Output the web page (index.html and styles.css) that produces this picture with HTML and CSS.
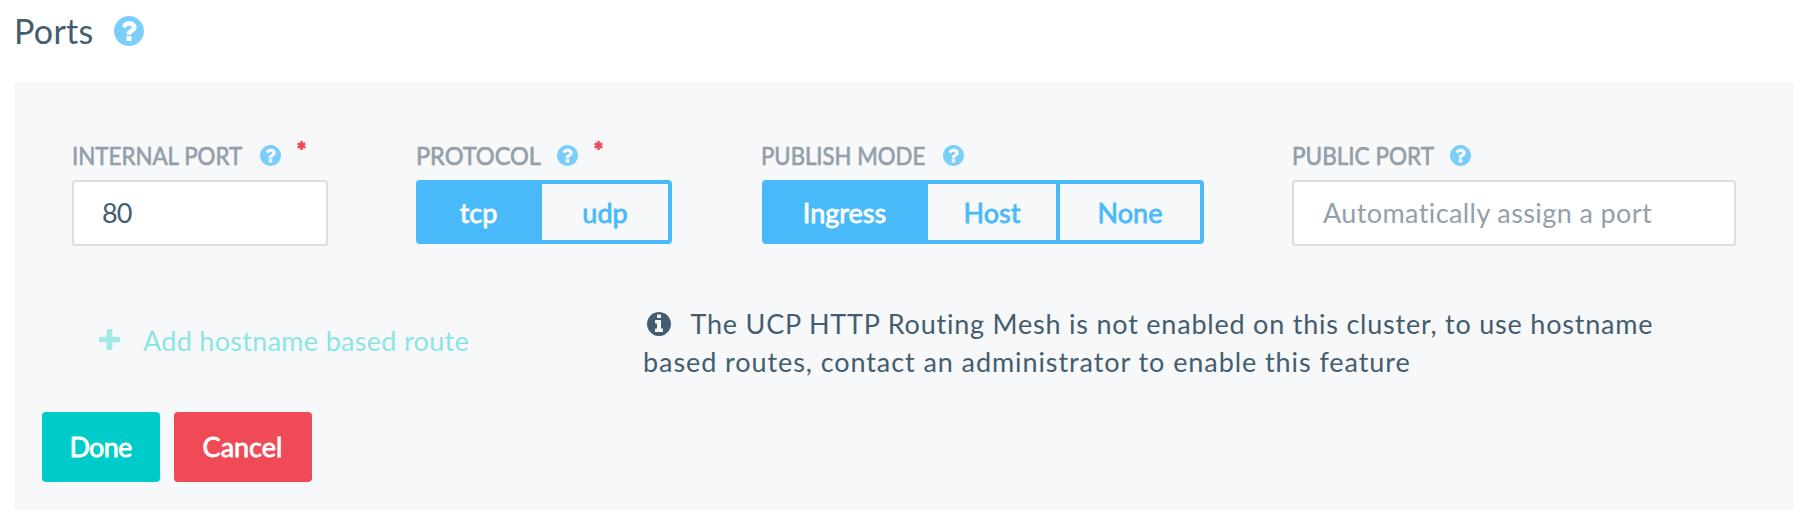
FILE: index.html
```html
<!DOCTYPE html>
<html lang="en">
<head>
<meta charset="utf-8">
<title>Ports</title>
<link rel="stylesheet" href="styles.css">
</head>
<body>
<svg class="sprite" aria-hidden="true">
  <symbol id="help" viewBox="128 128 1536 1536"><path d="M1024 1376v-192q0-14-9-23t-23-9h-192q-14 0-23 9t-9 23v192q0 14 9 23t23 9h192q14 0 23-9t9-23zm256-672q0-88-55.5-163t-138.5-116-170-41q-243 0-371 213-15 24 8 42l132 100q7 6 19 6 16 0 25-12 53-68 86-92 34-24 86-24 48 0 85.5 26t37.5 59q0 38-20 61t-68 45q-63 28-115.5 86.5t-52.5 125.5v36q0 14 9 23t23 9h192q14 0 23-9t9-23q0-19 21.5-49.5t54.5-49.5q32-18 49-28.5t46-35 44.5-48 28-60.5 12.5-81zm384 192q0 209-103 385.5t-279.5 279.5-385.5 103-385.5-103-279.5-279.5-103-385.5 103-385.5 279.5-279.5 385.5-103 385.5 103 279.5 279.5 103 385.5z"/></symbol>
  <symbol id="info" viewBox="128 128 1536 1536"><path d="M1152 1376v-160q0-14-9-23t-23-9h-96v-512q0-14-9-23t-23-9h-320q-14 0-23 9t-9 23v160q0 14 9 23t23 9h96v320h-96q-14 0-23 9t-9 23v160q0 14 9 23t23 9h448q14 0 23-9t9-23zm-128-896v-160q0-14-9-23t-23-9h-192q-14 0-23 9t-9 23v160q0 14 9 23t23 9h192q14 0 23-9t9-23zm640 416q0 209-103 385.5t-279.5 279.5-385.5 103-385.5-103-279.5-279.5-103-385.5 103-385.5 279.5-279.5 385.5-103 385.5 103 279.5 279.5 103 385.5z"/></symbol>
  <symbol id="plus" viewBox="192 192 1408 1408"><path d="M1600 800v192q0 40-28 68t-68 28h-416v416q0 40-28 68t-68 28h-192q-40 0-68-28t-28-68v-416h-416q-40 0-68-28t-28-68v-192q0-40 28-68t68-28h416v-416q0-40 28-68t68-28h192q40 0 68 28t28 68v416h416q40 0 68 28t28 68z"/></symbol>
  <symbol id="asterisk" viewBox="0 0 9 9"><path d="M4.5 0v9M.7 2.4l7.6 4.2M8.3 2.4L.7 6.6" stroke="currentColor" stroke-width="2.5"/></symbol>
</svg>
<header class="heading">
  <h1 class="title">Ports</h1>
  <svg class="help help-large"><use href="#help"/></svg>
</header>
<main class="panel">
  <div class="fields">
    <div class="field internal">
      <div class="label"><span class="label-text">INTERNAL PORT</span><svg class="help"><use href="#help"/></svg><svg class="required"><use href="#asterisk"/></svg></div>
      <input class="input" type="text" value="80" aria-label="Internal port">
    </div>
    <div class="field protocol">
      <div class="label"><span class="label-text">PROTOCOL</span><svg class="help"><use href="#help"/></svg><svg class="required"><use href="#asterisk"/></svg></div>
      <div class="segments">
        <button class="segment active tcp">tcp</button>
        <button class="segment udp">udp</button>
      </div>
    </div>
    <div class="field publish">
      <div class="label"><span class="label-text">PUBLISH MODE</span><svg class="help"><use href="#help"/></svg></div>
      <div class="segments">
        <button class="segment active ingress">Ingress</button>
        <button class="segment host">Host</button>
        <button class="segment none">None</button>
      </div>
    </div>
    <div class="field public">
      <div class="label"><span class="label-text">PUBLIC PORT</span><svg class="help"><use href="#help"/></svg></div>
      <input class="input" type="text" placeholder="Automatically assign a port" aria-label="Public port">
    </div>
  </div>
  <div class="routes">
    <a class="add-route"><svg class="plus"><use href="#plus"/></svg><span class="add-text">Add hostname based route</span></a>
    <p class="notice"><svg class="info"><use href="#info"/></svg><span class="line-one">The UCP HTTP Routing Mesh is not enabled on this cluster, to use hostname</span><br><span class="line-two">based routes, contact an administrator to enable this feature</span></p>
  </div>
  <div class="actions">
    <button class="button done">Done</button>
    <button class="button cancel">Cancel</button>
  </div>
</main>
</body>
</html>
```
FILE: styles.css
```css
* { box-sizing: border-box; }
body {
  margin: 0;
  background: #fff;
  color: #445d6e;
  font-family: Lato, "Open Sans", sans-serif;
  font-size: 27px;
}
button, input { font: inherit; margin: 0; }
.sprite { display: none; }
.heading {
  display: flex;
  height: 82px;
  padding: 10px 14px 0;
}
.title {
  width: 100px;
  margin: 0;
  font-size: 34px;
  font-weight: 400;
  line-height: 42px;
  letter-spacing: .3px;
  white-space: nowrap;
}
.help { width: 21px; height: 21px; margin: 3px 0 0 -.5px; fill: #7bcefb; flex: none; }
.help-large { width: 30px; height: 30px; margin-top: 6px; }
.panel {
  width: 1780px;
  height: 428px;
  margin-left: 14px;
  padding: 56px 28px 28px;
  border-radius: 4px;
  background: #f7f8fa;
}
.fields {
  display: grid;
  grid-template-columns: 344px 346px 530px 444px;
  margin-left: 30px;
}
.label { display: flex; height: 42px; padding-top: 4px; color: #939fab; }
.label-text {
  margin-top: -2px;
  font-size: 25px;
  line-height: 30px;
  white-space: nowrap;
  transform-origin: left;
  -webkit-text-stroke: .7px currentColor;
}
.internal .label-text { width: 188px; transform: scaleX(.894); }
.protocol .label-text { width: 141px; transform: scaleX(.94); }
.publish .label-text { width: 182px; margin-left: -1px; transform: scaleX(.887); }
.public .label-text { width: 158px; transform: scaleX(.902); }
.required { width: 9px; height: 9px; margin: -1px 0 0 16px; color: #ef4a55; }
.input {
  display: block;
  width: 256px;
  height: 66px;
  padding: 0 28px 2px;
  border: 2px solid #ddd;
  border-radius: 4px;
  background: #fff;
  color: #445d6e;
  letter-spacing: -.8px;
  outline: 0;
}
.public .input { width: 444px; padding-left: 29px; letter-spacing: .4px; }
.input::placeholder { color: #939fab; opacity: 1; }
.segments {
  display: flex;
  width: max-content;
  height: 64px;
  border: 4px solid #48bafa;
  border-radius: 4px;
  background: #48bafa;
}
.segment {
  padding: 0;
  border: 0;
  background: #f7f8fa;
  color: #48bafa;
  -webkit-text-stroke: .8px currentColor;
}
.active { background: #48bafa; color: #fff; }
.tcp { width: 122px; padding-right: 5px; }
.udp { width: 126px; }
.ingress { width: 162px; padding-right: 5px; }
.host { width: 128px; margin-right: 4px; }
.none { width: 140px; }
.routes { display: flex; height: 108px; margin-top: 58px; }
.add-route {
  display: flex;
  width: 573px;
  padding: 24px 0 0 57px;
  line-height: 34px;
  letter-spacing: .3px;
  color: #8be5e5;
}
.plus { width: 21px; height: 21px; margin: 1px 23px 0 0; fill: #a0e9e6; }
.add-text { margin-top: -4px; white-space: nowrap; }
.notice { margin: 1px 0 0 28px; line-height: 38px; white-space: nowrap; }
.line-one { letter-spacing: .78px; }
.line-two { letter-spacing: .92px; }
.info { width: 24px; height: 24px; margin: 0 19.5px 0 4px; vertical-align: -2px; fill: #445d6e; }
.actions { display: flex; gap: 14px; }
.button {
  height: 70px;
  padding: 0 1px 2px 0;
  border: 0;
  border-radius: 4px;
  color: #fff;
  -webkit-text-stroke: .8px currentColor;
}
.done { width: 118px; background: #00cbcb; letter-spacing: -.7px; }
.cancel { width: 138px; background: #ef4a55; }
```
